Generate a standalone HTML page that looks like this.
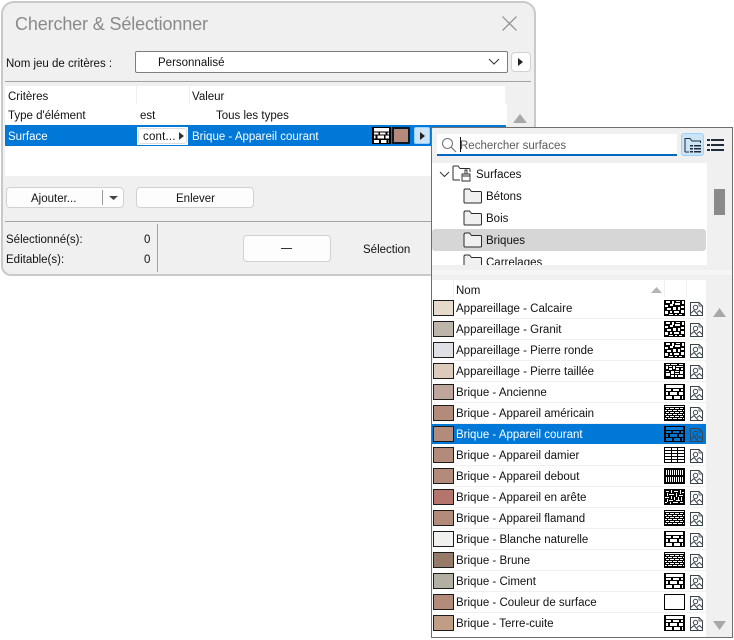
<!DOCTYPE html>
<html lang="fr">
<head>
<meta charset="utf-8">
<title>Chercher &amp; Sélectionner</title>
<style>
html,body{margin:0;padding:0;background:#fff;}
#p{position:relative;width:734px;height:640px;overflow:hidden;background:#fff;font-family:"Liberation Sans",sans-serif;font-size:11.5px;color:#111;}
#p div,#p span,#p svg{position:absolute;display:block;box-sizing:border-box;}
#p span{white-space:nowrap;line-height:14px;letter-spacing:0;margin-top:1px;}
.btn{background:#fdfdfd;border:1px solid #d2d2d2;border-radius:4px;}
.w{color:#fff;}
.sw{left:433px;width:21px;height:16px;border:1px solid #1c1c1c;}
.rl{left:454px;width:252px;height:1px;background:#f0f0f0;}
.n{left:456px;}
.pat{left:664px;width:21px;height:16px;}
.im{left:690px;width:13px;height:14px;}
</style>
</head>
<body>
<div id="p">
<svg width="0" height="0" style="left:0;top:0">
<defs>
<symbol id="b" viewBox="0 0 21 16" preserveAspectRatio="none" shape-rendering="crispEdges"><rect width="21" height="16" fill="#000"/><path fill="#fff" d="M2 1h17v3H2zM2 5h5v2H2zM9 5h6v2H9zM17 5h2v2h-2zM2 8h2v3H2zM6 8h7v3H6zM15 8h4v3h-4zM2 12h6v3H2zM10 12h6v3h-6zM18 12h1v3h-1z"/></symbol>
<symbol id="c" viewBox="0 0 21 16" preserveAspectRatio="none" shape-rendering="crispEdges"><rect width="21" height="16" fill="#000"/><path fill="#0078d7" d="M2 1h17v3H2zM2 5h5v2H2zM9 5h6v2H9zM17 5h2v2h-2zM2 8h2v3H2zM6 8h7v3H6zM15 8h4v3h-4zM2 12h6v3H2zM10 12h6v3h-6zM18 12h1v3h-1z"/></symbol>
<symbol id="d" viewBox="0 0 21 16" shape-rendering="crispEdges"><rect width="21" height="16" fill="#000"/><path fill="#fff" d="M1 1h19v1H1zM2 3h3v1H2zM6 3h4v1H6zM11 3h4v1h-4zM16 3h3v1h-3zM1 5h2v1H1zM4 5h4v1H4zM9 5h4v1H9zM14 5h4v1h-4zM19 5h1v1h-1zM2 7h3v1H2zM6 7h4v1H6zM11 7h4v1h-4zM16 7h3v1h-3zM1 9h2v1H1zM4 9h4v1H4zM9 9h4v1H9zM14 9h4v1h-4zM19 9h1v1h-1zM2 11h3v1H2zM6 11h4v1H6zM11 11h4v1h-4zM16 11h3v1h-3zM1 13h2v1H1zM4 13h4v1H4zM9 13h4v1H9zM14 13h4v1h-4zM19 13h1v1h-1z"/></symbol>
<symbol id="s" viewBox="0 0 21 16" shape-rendering="crispEdges"><rect width="21" height="16" fill="#000"/><path fill="#fff" d="M2 1h4v2H2zM8 1h2v3H8zM12 1h4v1h-4zM18 1h2v3h-2zM1 5h3v2H1zM6 4h3v2H6zM11 3h5v2h-5zM17 6h3v2h-3zM3 8h4v2H3zM9 7h3v3H9zM14 7h2v3h-2zM1 11h3v3H1zM6 11h2v2H6zM10 11h5v2h-5zM17 10h3v3h-3zM5 14h4v1H5zM11 14h2v1h-2zM15 14h3v1h-3z"/></symbol>
<symbol id="t" viewBox="0 0 21 16" shape-rendering="crispEdges"><rect width="21" height="16" fill="#000"/><path fill="#fff" d="M2 1h4v1H2zM7 1h6v1H7zM15 1h4v1h-4zM2 3h2v3H2zM5 3h3v1H5zM9 3h2v3H9zM12 3h7v1h-7zM5 5h3v2H5zM12 5h3v2h-3zM17 5h2v2h-2zM2 8h3v1H2zM7 8h3v3H7zM11 8h4v1h-4zM16 8h3v3h-3zM2 10h4v3H2zM11 10h4v1h-4zM7 12h3v2H7zM11 12h2v2h-2zM14 12h5v2h-5z"/></symbol>
<symbol id="g" viewBox="0 0 21 16" shape-rendering="crispEdges"><rect width="21" height="16" fill="#000"/><path fill="#fff" d="M1 1h6v2H1zM8 1h5v2H8zM14 1h6v2h-6zM1 4h6v2H1zM8 4h5v2H8zM14 4h6v2h-6zM1 7h6v2H1zM8 7h5v2H8zM14 7h6v2h-6zM1 10h6v2H1zM8 10h5v2H8zM14 10h6v2h-6zM1 13h6v2H1zM8 13h5v2H8zM14 13h6v2h-6z"/></symbol>
<symbol id="v" viewBox="0 0 21 16" shape-rendering="crispEdges"><rect width="21" height="16" fill="#000"/><path fill="#fff" d="M2 2h1v5H2zM4 2h1v5H4zM6 2h1v5H6zM8 2h1v5H8zM10 2h1v5h-1zM12 2h1v5h-1zM14 2h1v5h-1zM16 2h1v5h-1zM18 2h1v5h-1zM2 9h1v5H2zM4 9h1v5H4zM6 9h1v5H6zM8 9h1v5H8zM10 9h1v5h-1zM12 9h1v5h-1zM14 9h1v5h-1zM16 9h1v5h-1zM18 9h1v5h-1z"/></symbol>
<symbol id="h" viewBox="0 0 21 16" shape-rendering="crispEdges"><rect width="21" height="16" fill="#000"/><path fill="#fff" d="M2 2h3v1H2zM7 1h1v3H7zM10 2h4v1h-4zM16 1h1v4h-1zM18 3h2v1h-2zM3 4h1v3H3zM5 5h5v1H5zM12 4h1v4h-1zM15 6h4v1h-4zM1 8h4v1H1zM7 7h1v3H7zM10 8h1v3h-1zM14 8h1v3h-1zM17 8h1v4h-1zM3 10h1v3H3zM5 11h4v1H5zM12 11h4v1h-4zM1 13h2v1H1zM6 13h1v2H6zM9 13h5v1H9zM16 13h3v1h-3z"/></symbol>
<symbol id="e" viewBox="0 0 21 16" shape-rendering="crispEdges"><rect x=".5" y=".5" width="20" height="15" fill="#fff" stroke="#000"/></symbol>
<symbol id="i" viewBox="0 0 13 14"><path d="M.5.5h8.500l3.500 3.500v9.500H.5z" fill="none" stroke="#3b444b"/><path d="M9 .5v3.500h3.500" fill="none" stroke="#3b444b" stroke-width=".8"/><circle cx="5.500" cy="5.500" r="2.200" fill="none" stroke="#3b444b"/><path d="M.5 11.500l3.500-3 4.500 5M7 10.500l2.500-2 3 3" fill="none" stroke="#3b444b"/></symbol>
<symbol id="f" viewBox="0 0 19 16"><path d="M1 14V2.500C1 1.500 1.500 1 2.500 1h4l2 2.500H17.500c.5 0 1 .5 1 1V14c0 .7-.5 1-1 1H2c-.6 0-1-.4-1-1z" fill="#f0f0f0" stroke="#2b2b2b"/></symbol>
</defs>
</svg>

<!-- dialog -->
<div style="left:1px;top:1px;width:535px;height:275px;background:#f0f0f0;border:2px solid #c9c9c9;border-radius:13px 13px 10px 10px;"></div>
<span style="left:15px;top:13px;margin-top:0;font-size:18px;line-height:22px;color:#8a8a8a;letter-spacing:-.14px;">Chercher &amp; Sélectionner</span>
<svg style="left:501px;top:15px;" width="17" height="17" viewBox="0 0 17 17"><path d="M1.500 1.500l14 14M15.500 1.500l-14 14" stroke="#8c8c8c" stroke-width="1.200" fill="none"/></svg>

<span style="left:6px;top:56px;">Nom jeu de critères :</span>
<div style="left:135px;top:51px;width:373px;height:22px;background:#fff;border:1px solid #7d7d7d;border-radius:2px;"></div>
<span style="left:158px;top:55px;">Personnalisé</span>
<svg style="left:488px;top:58px;" width="12" height="8" viewBox="0 0 12 8"><path d="M1 1l5 5 5-5" fill="none" stroke="#333" stroke-width="1"/></svg>
<div class="btn" style="left:511px;top:52px;width:20px;height:20px;"></div>
<svg style="left:518px;top:58px;" width="6" height="8" viewBox="0 0 6 8"><path d="M0 0l5 4-5 4z" fill="#222"/></svg>
<div style="left:5px;top:81px;width:526px;height:1px;background:#a3a3a3;"></div>

<!-- list -->
<div style="left:5px;top:86px;width:500px;height:18px;background:#fff;"></div>
<div style="left:5px;top:104px;width:502px;height:72px;background:#fff;"></div>
<div style="left:136px;top:86px;width:1px;height:18px;background:#efefef;"></div>
<div style="left:189px;top:86px;width:1px;height:18px;background:#efefef;"></div>
<span style="left:8px;top:89px;">Critères</span>
<span style="left:192px;top:89px;">Valeur</span>
<span style="left:8px;top:108px;">Type d'élément</span>
<span style="left:140px;top:108px;">est</span>
<span style="left:216px;top:108px;">Tous les types</span>
<div style="left:5px;top:125px;width:501px;height:21px;background:#0078d7;"></div>
<span class="w" style="left:8px;top:129px;">Surface</span>
<div style="left:137px;top:127px;width:51px;height:18px;background:#fff;"></div>
<div style="left:138px;top:128px;width:49px;height:16px;border:1px solid #ddd;border-radius:3px;background:#fff;"></div>
<span style="left:143px;top:129px;letter-spacing:.2px;">cont...</span>
<svg style="left:179px;top:132px;" width="5" height="8" viewBox="0 0 5 8"><path d="M0 0l5 4-5 4z" fill="#333"/></svg>
<span class="w" style="left:192px;top:129px;">Brique - Appareil courant</span>
<svg style="left:372px;top:127px;width:19px;height:17px;"><use href="#b" width="19" height="17"/></svg>
<div style="left:392px;top:127px;width:18px;height:17px;background:#b58a7a;border:2px solid #0a1a2a;"></div>
<div style="left:414px;top:127px;width:16px;height:17px;background:#cce4f7;border:1px solid #99d1ff;border-radius:2px;"></div>
<svg style="left:420px;top:132px;" width="5" height="8" viewBox="0 0 5 8"><path d="M0 0l5 4-5 4z" fill="#222"/></svg>
<svg style="left:513px;top:114px;" width="14" height="9" viewBox="0 0 14 9"><path d="M7 0l7 9H0z" fill="#a8a8a8"/></svg>

<!-- bottom of dialog -->
<div class="btn" style="left:6px;top:187px;width:118px;height:21px;"></div>
<span style="left:31px;top:191px;">Ajouter...</span>
<div style="left:102px;top:190px;width:1px;height:15px;background:#9a9a9a;"></div>
<svg style="left:109px;top:196px;" width="9" height="4" viewBox="0 0 9 4"><path d="M0 0h9L4.500 4z" fill="#444"/></svg>
<div class="btn" style="left:136px;top:187px;width:118px;height:21px;"></div>
<span style="left:176px;top:191px;">Enlever</span>
<div style="left:5px;top:221px;width:427px;height:1px;background:#a3a3a3;"></div>
<span style="left:6px;top:232px;">Sélectionné(s):</span>
<span style="left:144px;top:232px;">0</span>
<span style="left:6px;top:252px;">Editable(s):</span>
<span style="left:144px;top:252px;">0</span>
<div style="left:157px;top:224px;width:1px;height:48px;background:#a3a3a3;"></div>
<div class="btn" style="left:243px;top:235px;width:88px;height:27px;"></div>
<div style="left:281px;top:248px;width:11px;height:1px;background:#333;"></div>
<span style="left:363px;top:242px;">Sélection</span>

<!-- popup -->
<div style="left:431px;top:127px;width:302px;height:511px;background:#f0f0f0;border:1px solid #6e6e6e;"></div>
<div style="left:437px;top:134px;width:240px;height:20px;background:#fff;"></div>
<div style="left:437px;top:154px;width:240px;height:2px;background:#0067c0;"></div>
<svg style="left:441px;top:137px;" width="16" height="16" viewBox="0 0 16 16"><circle cx="6.500" cy="6.500" r="5" fill="none" stroke="#777" stroke-width="1.100"/><path d="M10.200 10.200L15 15" stroke="#777" stroke-width="1.200"/></svg>
<div style="left:460px;top:137px;width:1px;height:15px;background:#111;"></div>
<span style="left:460px;top:138px;color:#5b5b5b;">Rechercher surfaces</span>
<div style="left:681px;top:133px;width:23px;height:23px;background:#cce4f7;border:1px solid #99d1ff;border-radius:3px;"></div>
<svg style="left:684px;top:137px;" width="18" height="16" viewBox="0 0 18 16"><path d="M1 15V1.500h5l2 2.500h8.500v2M1 15h4" fill="none" stroke="#1f2d3a" stroke-width="1"/><path d="M6 8h3v1.500H6zM10 8h7v1.500h-7zM6 11h3v1.500H6zM10 11h7v1.500h-7zM6 14h3v1.500H6zM10 14h7v1.500h-7z" fill="#1f2d3a"/></svg>
<svg style="left:707px;top:139px;" width="17" height="12" viewBox="0 0 17 12" shape-rendering="crispEdges"><path d="M0 0h3v2H0zM4 0h13v2H4zM0 5h3v2H0zM4 5h13v2H4zM0 10h3v2H0zM4 10h13v2H4z" fill="#1f2d3a"/></svg>

<!-- tree -->
<div style="left:432px;top:163px;width:275px;height:102px;background:#fff;overflow:hidden;">
  <div style="left:0;top:66px;width:274px;height:22px;background:#d6d6d6;border-radius:3px;"></div>
  <span style="left:44px;top:4px;">Surfaces</span>
  <span style="left:54px;top:26px;">Bétons</span>
  <span style="left:54px;top:48px;">Bois</span>
  <span style="left:54px;top:70px;">Briques</span>
  <span style="left:54px;top:92px;">Carrelages</span>
  <svg style="left:31px;top:25px;width:19px;height:16px;"><use href="#f"/></svg>
  <svg style="left:31px;top:47px;width:19px;height:16px;"><use href="#f"/></svg>
  <svg style="left:31px;top:69px;width:19px;height:16px;"><use href="#f"/></svg>
  <svg style="left:31px;top:91px;width:19px;height:16px;"><use href="#f"/></svg>
</div>
<svg style="left:439px;top:171px;" width="11" height="7" viewBox="0 0 11 7"><path d="M1 1l4.500 4.500L10 1" fill="none" stroke="#333"/></svg>
<svg style="left:452px;top:165px;" width="20" height="18" viewBox="0 0 20 18"><path d="M1 15V2c0-.6.400-1 1-1h4l2 2.500h9c.6 0 1 .4 1 1V7M1 15h7" fill="none" stroke="#2b2b2b"/><path d="M13 5h2v4h-2zM10 9h8v2h-8zM10 11h8v5h-8z" fill="#fff" stroke="#2b2b2b" stroke-width=".9"/></svg>
<div style="left:714px;top:189px;width:11px;height:26px;background:#8a8a8a;"></div>
<div style="left:432px;top:270px;width:300px;height:5px;background:#f6f6f6;"></div>

<!-- table -->
<div style="left:432px;top:280px;width:274px;height:357px;background:#fff;"></div>
<div style="left:453px;top:280px;width:1px;height:17px;background:#efefef;"></div>
<div style="left:664px;top:280px;width:1px;height:17px;background:#efefef;"></div>
<div style="left:686px;top:280px;width:1px;height:17px;background:#efefef;"></div>
<span class="n" style="top:283px;">Nom</span>
<svg style="left:651px;top:287px;" width="11" height="6" viewBox="0 0 11 6"><path d="M5.500 0L11 6H0z" fill="#b5b5b5"/></svg>

<div style="left:432px;top:424px;width:274px;height:20px;background:#0078d7;"></div>

<div class="rl" style="top:318px"></div><div class="rl" style="top:339px"></div><div class="rl" style="top:360px"></div><div class="rl" style="top:381px"></div><div class="rl" style="top:402px"></div><div class="rl" style="top:423px"></div><div class="rl" style="top:465px"></div><div class="rl" style="top:486px"></div><div class="rl" style="top:507px"></div><div class="rl" style="top:528px"></div><div class="rl" style="top:549px"></div><div class="rl" style="top:570px"></div><div class="rl" style="top:591px"></div><div class="rl" style="top:612px"></div>

<div class="sw" style="top:300px;background:#e6dacd"></div><span class="n" style="top:301px">Appareillage - Calcaire</span><svg class="pat" style="top:300px"><use href="#s"/></svg><svg class="im" style="top:302px"><use href="#i"/></svg>
<div class="sw" style="top:321px;background:#bdb5aa"></div><span class="n" style="top:322px">Appareillage - Granit</span><svg class="pat" style="top:321px"><use href="#s"/></svg><svg class="im" style="top:323px"><use href="#i"/></svg>
<div class="sw" style="top:342px;background:#dfe0e3"></div><span class="n" style="top:343px">Appareillage - Pierre ronde</span><svg class="pat" style="top:342px"><use href="#s"/></svg><svg class="im" style="top:344px"><use href="#i"/></svg>
<div class="sw" style="top:363px;background:#dccbba"></div><span class="n" style="top:364px">Appareillage - Pierre taillée</span><svg class="pat" style="top:363px"><use href="#t"/></svg><svg class="im" style="top:365px"><use href="#i"/></svg>
<div class="sw" style="top:384px;background:#bfa59c"></div><span class="n" style="top:385px">Brique - Ancienne</span><svg class="pat" style="top:384px"><use href="#b" width="21" height="16"/></svg><svg class="im" style="top:386px"><use href="#i"/></svg>
<div class="sw" style="top:405px;background:#b38b7b"></div><span class="n" style="top:406px">Brique - Appareil américain</span><svg class="pat" style="top:405px"><use href="#d"/></svg><svg class="im" style="top:407px"><use href="#i"/></svg>
<div class="sw" style="top:426px;background:#b38b7b"></div><span class="n w" style="top:427px">Brique - Appareil courant</span><svg class="pat" style="top:426px"><use href="#c" width="21" height="16"/></svg><svg class="im" style="top:428px;opacity:.9"><use href="#i"/></svg>
<div class="sw" style="top:447px;background:#b38b7b"></div><span class="n" style="top:448px">Brique - Appareil damier</span><svg class="pat" style="top:447px"><use href="#g"/></svg><svg class="im" style="top:449px"><use href="#i"/></svg>
<div class="sw" style="top:468px;background:#b38b7b"></div><span class="n" style="top:469px">Brique - Appareil debout</span><svg class="pat" style="top:468px"><use href="#v"/></svg><svg class="im" style="top:470px"><use href="#i"/></svg>
<div class="sw" style="top:489px;background:#b5756c"></div><span class="n" style="top:490px">Brique - Appareil en arête</span><svg class="pat" style="top:489px"><use href="#h"/></svg><svg class="im" style="top:491px"><use href="#i"/></svg>
<div class="sw" style="top:510px;background:#b38b7b"></div><span class="n" style="top:511px">Brique - Appareil flamand</span><svg class="pat" style="top:510px"><use href="#d"/></svg><svg class="im" style="top:512px"><use href="#i"/></svg>
<div class="sw" style="top:531px;background:#f1f0ee"></div><span class="n" style="top:532px">Brique - Blanche naturelle</span><svg class="pat" style="top:531px"><use href="#b" width="21" height="16"/></svg><svg class="im" style="top:533px"><use href="#i"/></svg>
<div class="sw" style="top:552px;background:#957b67"></div><span class="n" style="top:553px">Brique - Brune</span><svg class="pat" style="top:552px"><use href="#d"/></svg><svg class="im" style="top:554px"><use href="#i"/></svg>
<div class="sw" style="top:573px;background:#b4afa3"></div><span class="n" style="top:574px">Brique - Ciment</span><svg class="pat" style="top:573px"><use href="#b" width="21" height="16"/></svg><svg class="im" style="top:575px"><use href="#i"/></svg>
<div class="sw" style="top:594px;background:#b38b7b"></div><span class="n" style="top:595px">Brique - Couleur de surface</span><svg class="pat" style="top:594px"><use href="#e"/></svg><svg class="im" style="top:596px"><use href="#i"/></svg>
<div class="sw" style="top:615px;background:#c09e85"></div><span class="n" style="top:616px">Brique - Terre-cuite</span><svg class="pat" style="top:615px"><use href="#b" width="21" height="16"/></svg><svg class="im" style="top:617px"><use href="#i"/></svg>

<svg style="left:713px;top:308px;" width="13" height="9" viewBox="0 0 13 9"><path d="M6.500 0L13 9H0z" fill="#a8a8a8"/></svg>
<svg style="left:713px;top:621px;" width="13" height="9" viewBox="0 0 13 9"><path d="M0 0h13L6.500 9z" fill="#a8a8a8"/></svg>
</div>
</body>
</html>
